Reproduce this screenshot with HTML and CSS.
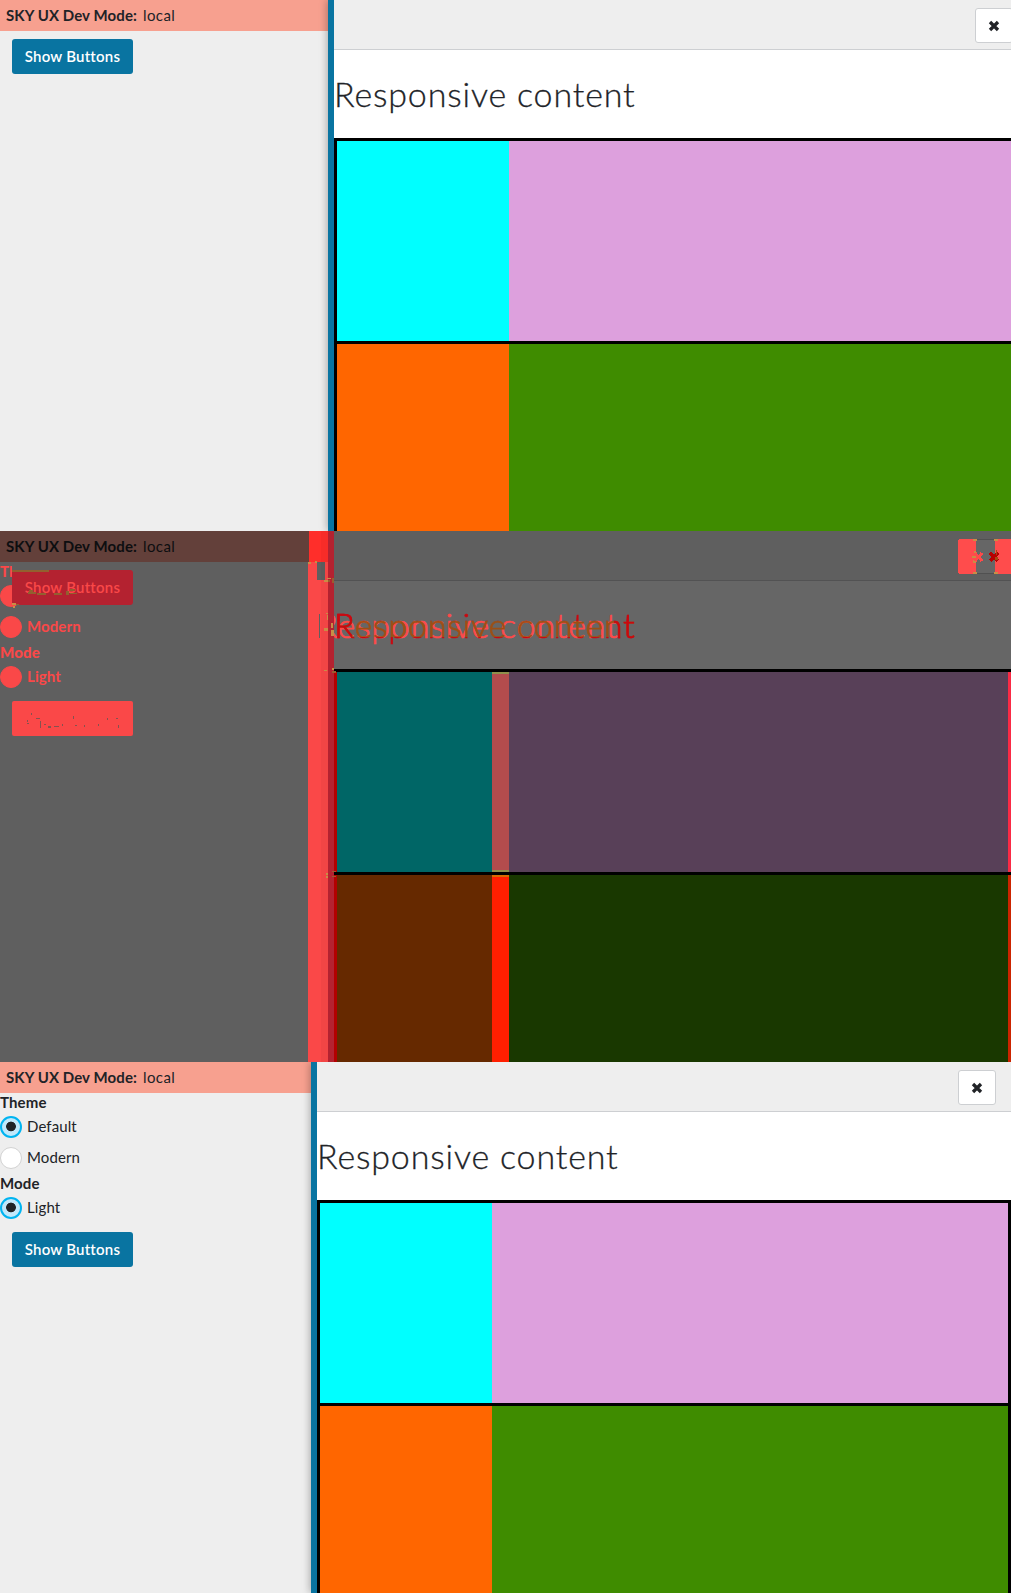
FILE: index.html
```
<!DOCTYPE html>
<html lang="en">
<head>
<meta charset="utf-8">
<title>SKY UX flyout</title>
<link rel="stylesheet" href="styles.css">
</head>
<body>
<section class="frame before">
  <aside class="side">
    <div class="banner"><b>SKY UX Dev Mode:</b><span>local</span></div>
    <button class="show"><span>Show Buttons</span></button>
  </aside>
  <div class="handle"></div>
  <main class="flyout">
    <header class="bar"><button class="close"><svg viewBox="0 0 12 12"><path d="M2 2l8 8M10 2L2 10"/></svg></button></header>
    <div class="heading"><h1>Responsive content</h1></div>
    <div class="grid"><i class="cyan"></i><i class="plum"></i><i class="orange"></i><i class="green"></i></div>
  </main>
</section>

<section class="frame diff">
  <aside class="side">
    <div class="banner"><b>SKY UX Dev Mode:</b><span>local</span></div>
    <button class="show"><span>Show Buttons</span></button>
  </aside>
  <div class="handle"></div>
  <main class="flyout">
    <header class="bar"></header>
    <div class="heading"><h1>Responsive content</h1></div>
    <div class="grid"><i class="cyan"></i><i class="plum"></i><i class="orange"></i><i class="green"></i></div>
  </main>
  <div class="ghost">
    <div class="options">
      <b class="group theme">Theme</b>
      <div class="radio"><i class="dot"></i></div>
      <div class="radio"><i class="dot"></i><span class="modern">Modern</span></div>
      <b class="group mode">Mode</b>
      <div class="radio"><i class="dot"></i><span class="light">Light</span></div>
    </div>
    <div class="ghost-button"></div>
  </div>
  <h1 class="ghost-title">Responsive content</h1>
  <svg class="marks" viewBox="0 0 1011 531" shape-rendering="crispEdges">
    <path fill="#fa4848" d="M308 31h20v500h-20z"/>
    <path fill="#ff2e2a" d="M309 0h19v31h-19z"/>
    <path fill="#5f5f5f" d="M317 31h8v18h-8zM319 83h1v24h-1z"/>
    <path fill="#000" opacity=".03" d="M321 0h7v531h-7zM324 0h4v531h-4zM326 0h2v531h-2z"/>
    <path fill="#b30000" d="M334 141h3v200h-3zM334 344h3v187h-3z"/>
    <path fill="#c98d45" d="M308 31h3v2h-3zM315 30h2v2h-2zM324 49h4v2h-4zM327 47h4v1h-4zM326 82h2v1h-2zM327 84h1v5h-1zM324 97h4v3h-4zM331 92h2v5h-2zM331 99h3v6h-3zM324 139h3v1h-3zM332 137h2v2h-2zM326 342h2v2h-2zM326 345h2v2h-2z"/>
    <path fill="#9b5b2e" d="M328 49h2v2h-2zM332 47h2v5h-2zM332 140h4v2h-4zM332 340h4v1h-4zM332 345h4v1h-4z"/>
    <path fill="#b34c4d" d="M492 143h17v196h-17z"/>
    <path fill="#8f8f4b" d="M492 141h17v2h-17zM492 339h17v2h-17z"/>
    <path fill="#ff1f00" d="M492 344h17v187h-17z"/>
    <path fill="#d96a00" d="M492 344h17v2h-17z"/>
    <path fill="#fa2a45" d="M1008 141h3v200h-3z"/>
    <path fill="#cc2400" d="M1008 344h3v187h-3z"/>
    <path fill="#666" d="M975 9h20v33h-20z"/>
    <path fill="#515151" d="M975 8h20v1h-20zM975 42h20v1h-20z"/>
    <path fill="#ff4c4c" d="M959 8h17v35h-17v-1h-1v-33h1zM995 8h16v35h-16z"/>
    <path fill="#c98d45" d="M973 8h4v2h-4zM994 8h4v2h-4zM973 41h4v2h-4zM994 41h4v2h-4zM974 20h2v2h-2zM972 25h4v2h-4zM973 29h3v3h-3z"/>
    <path class="cross pale" d="M975 22l7 8M982 22l-7 8"/>
    <path class="cross deep" d="M990 22l8 8M998 22l-8 8"/>
    <path fill="#a44a12" d="M996 19h1v5h-1zM995 26h3v3h-3z"/>
    <path fill="#92602f" d="M12 39h37v2H12zM12 73h7v1h-7zM28 61h8v2h-8zM29 59h4v2h-4zM37 62h9v2h-9zM54 62h8v2h-8zM66 60h3v4h-3zM70 58h5v2h-5zM70 62h7v1h-7z"/>
    <path fill="#c98d45" d="M12 72h4v2h-4zM13 75h2v2h-2z"/>
    <path fill="#85524f" d="M27 192h2v1h-2zM31 182h1v2h-1zM27 189h1v2h-1zM36 187h4v1h-4zM40 190h1v7h-1zM44 193h2v1h-2zM48 195h3v2h-3zM54 195h5v1h-5zM62 193h1v2h-1zM73 185h1v3h-1zM75 194h2v1h-2zM84 194h1v2h-1zM98 193h1v2h-1zM107 187h1v2h-1zM116 187h2v1h-2zM118 194h1v3h-1z"/>
  </svg>
</section>

<section class="frame after">
  <aside class="side">
    <div class="banner"><b>SKY UX Dev Mode:</b><span>local</span></div>
    <div class="options">
      <b class="group theme">Theme</b>
      <div class="radio"><i class="dot on"></i><span class="default">Default</span></div>
      <div class="radio"><i class="dot"></i><span class="modern">Modern</span></div>
      <b class="group mode">Mode</b>
      <div class="radio"><i class="dot on"></i><span class="light">Light</span></div>
    </div>
    <button class="show"><span>Show Buttons</span></button>
  </aside>
  <div class="handle"></div>
  <main class="flyout">
    <header class="bar"><button class="close"><svg viewBox="0 0 12 12"><path d="M2 2l8 8M10 2L2 10"/></svg></button></header>
    <div class="heading"><h1>Responsive content</h1></div>
    <div class="grid"><i class="cyan"></i><i class="plum"></i><i class="orange"></i><i class="green"></i></div>
  </main>
</section>
</body>
</html>
```
FILE: styles.css
```
* { box-sizing: border-box; }
body { margin: 0; width: 1011px; font: 15px/20px Lato, "Open Sans", sans-serif; color: #212327; }
button { font: inherit; margin: 0; padding: 0; }
.frame { position: relative; display: flex; height: 531px; overflow: hidden; }
.side { flex: none; width: 328px; background: #eee; }
.after .side { width: 311px; }
.banner { display: flex; align-items: center; gap: 6px; height: 31px; padding: 0 0 1px 6px; background: #f7a08f; white-space: nowrap; }
.banner b { width: 131px; letter-spacing: .1px; }
.banner span { letter-spacing: .4px; }
.show { display: block; width: 121px; height: 35px; margin: 8px 0 0 12px; padding-bottom: 1px; border: 0; border-radius: 3px; background: #0974a1; color: #fff; font-weight: 600; letter-spacing: .22px; white-space: nowrap; }
.handle { flex: none; width: 6px; background: #0974a1; box-shadow: 0 0 8px rgba(0, 0, 0, .4); }
.flyout { position: relative; flex: none; width: 694px; background: #fff; }
.bar { display: flex; justify-content: flex-end; height: 50px; padding: 8px 15px 0 0; background: #eee; border-bottom: 1px solid #cdcfd2; }
.close { display: flex; align-items: center; justify-content: center; width: 38px; height: 35px; border: 1px solid #cdcfd2; border-radius: 3px; background: #fff; }
.close svg { width: 12px; height: 12px; fill: none; stroke: #212327; stroke-width: 3.3; }
.heading { height: 88px; padding: 22px 0 0; }
h1 { margin: 0; font-size: 34px; line-height: 44px; font-weight: 300; letter-spacing: .84px; white-space: nowrap; -webkit-text-stroke: .3px; }
.grid { display: grid; grid-template: 200px 200px / 172px 1fr; row-gap: 3px; border: 3px solid #000; background: #000; }
.cyan { background: #0ff; }
.plum { background: #dda0dd; }
.orange { background: #f60; }
.green { background: #3f8c00; }

.group { display: block; height: 20px; line-height: 18px; letter-spacing: .15px; }
.radio { display: flex; align-items: center; gap: 5px; height: 30px; }
.radio span { padding-bottom: 2px; letter-spacing: .1px; }
.radio + .radio { height: 31px; padding-bottom: 1px; }
.group + .radio { height: 30px; padding-bottom: 3px; }
.dot { width: 22px; height: 22px; border: 1px solid #d2d2d2; border-radius: 50%; background: #fff; }
.dot.on { border: 2px solid #00b4f1; background: radial-gradient(circle at 50% 47%, #212327 4.5px, #c1e8fb 5.2px); }

.diff .side { background: #5f5f5f; }
.diff .banner { background: #63403a; color: #0d0e10; }
.diff .show { background: #b42230; color: #fa4848; }
.diff .handle { background: #b42230; box-shadow: none; }
.diff .flyout { background: #666; }
.diff .bar { background: #5f5f5f; border-color: #525253; }
.diff .cyan { background: #066; }
.diff .plum { background: #584058; }
.diff .orange { background: #662900; }
.diff .green { background: #193800; }
.diff .flyout h1 { position: relative; z-index: 1; width: 310px; color: transparent; background: linear-gradient(90deg, #c90810 18px, transparent 18px 280px, #c90810 280px), linear-gradient(#c90810 18px, #9c4f14 18px 34px, #c90810 34px); -webkit-background-clip: text; background-clip: text; -webkit-text-stroke: .7px transparent; }
.ghost { position: absolute; left: 0; top: 31px; width: 133px; color: #fa4848; font-weight: 700; }
.ghost .dot { background: #fa4848; border-color: #fa4848; }
.ghost .options { clip-path: polygon(0 0, 12px 0, 12px 43px, 133px 43px, 133px 200px, 0 200px); }
.ghost-button { width: 121px; height: 35px; margin: 8px 0 0 12px; border-radius: 2px; background: #fa4848; }
.ghost-title { position: absolute; left: 317px; top: 72px; color: #ff4a4a; clip-path: inset(0 0 0 17px); -webkit-text-stroke: .7px; }
.marks { position: absolute; left: 0; top: 0; width: 1011px; height: 531px; pointer-events: none; }
.cross { fill: none; stroke-width: 3; }
.pale { stroke: #ff4a4a; }
.deep { stroke: #b80000; }
```
